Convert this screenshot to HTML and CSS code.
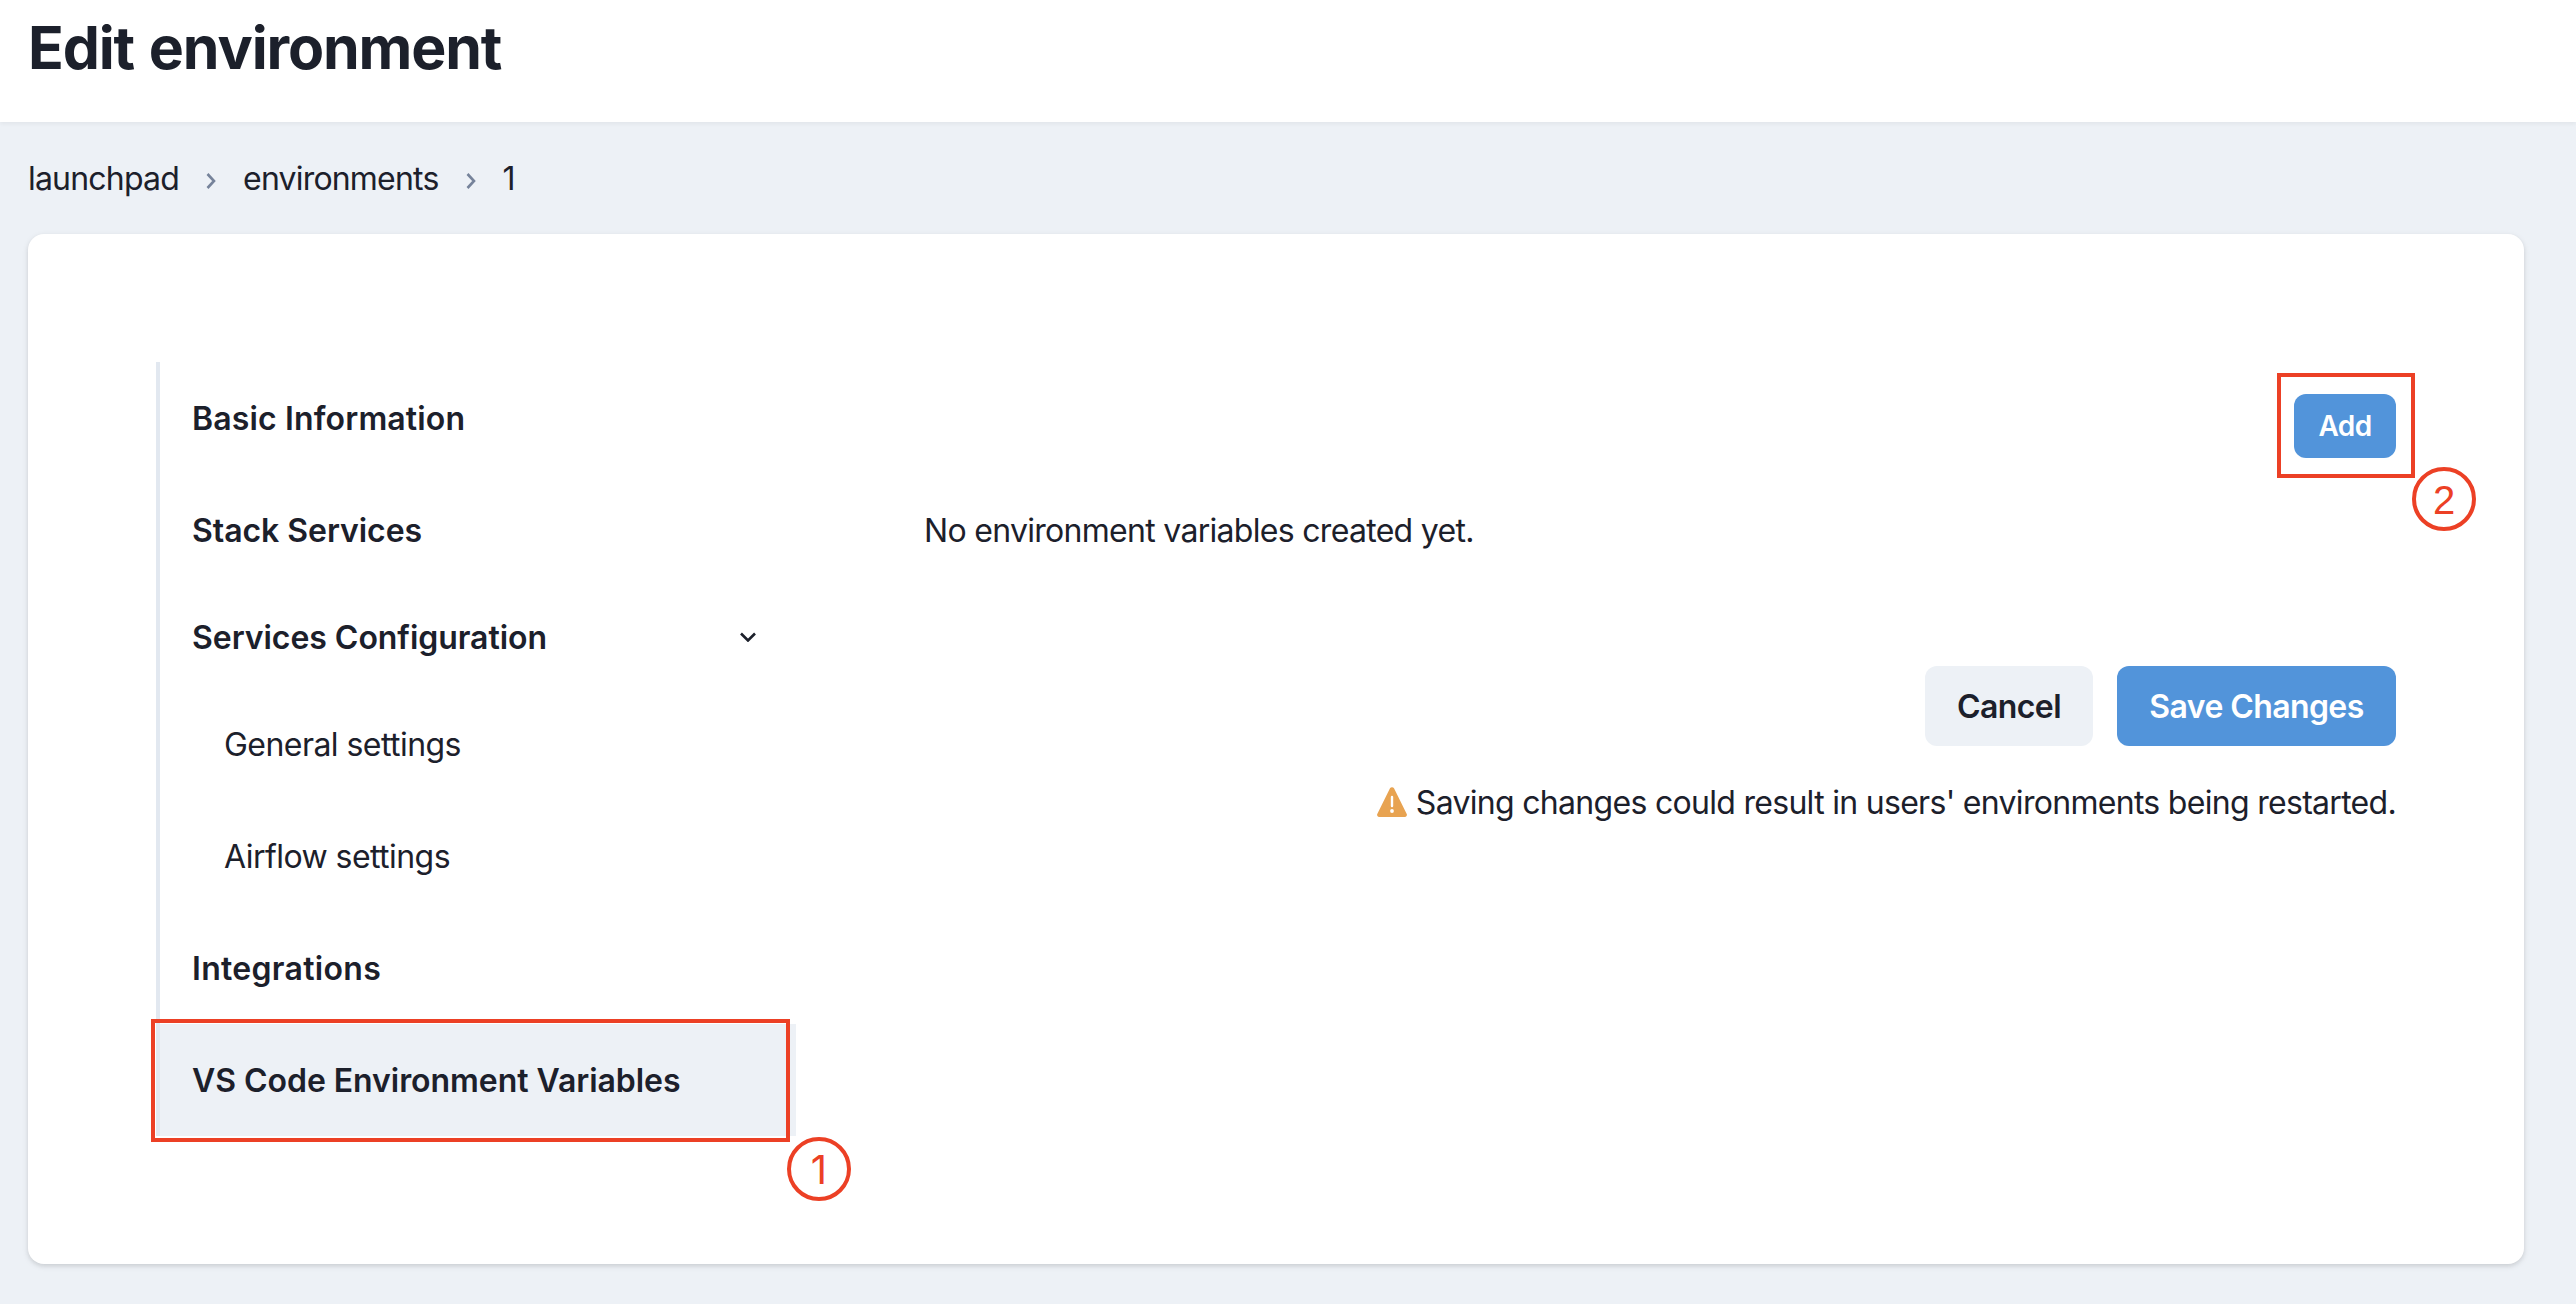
FILE: index.html
```html
<!DOCTYPE html>
<html lang="en">
<head>
<meta charset="utf-8">
<title>Edit environment</title>
<link rel="stylesheet" href="styles.css">
</head>
<body>
<header class="header"><h1 class="title">Edit environment</h1></header>
<main class="main">
  <nav class="crumbs">
    <a class="crumb">launchpad</a>
    <svg class="sep" viewBox="0 0 10 18"><path d="M1.500 2 8 9l-6.500 7"/></svg>
    <a class="crumb">environments</a>
    <svg class="sep" viewBox="0 0 10 18"><path d="M1.500 2 8 9l-6.500 7"/></svg>
    <span class="crumb">1</span>
  </nav>
  <section class="card">
    <ul class="tabs">
      <li class="tab"><span class="label wide">Basic Information</span></li>
      <li class="tab"><span class="label">Stack Services</span></li>
      <li class="tab group"><span class="label">Services Configuration</span>
        <svg class="chevron" viewBox="0 0 16 10"><path d="M1 1.500 8 8.500l7-7"/></svg></li>
      <li class="tab sub"><span class="label">General settings</span></li>
      <li class="tab sub"><span class="label">Airflow settings</span></li>
      <li class="tab"><span class="label wider">Integrations</span></li>
      <li class="tab active"><span class="label">VS Code Environment Variables</span>
        <span class="mark mark-tab"></span><span class="step step-one">1</span></li>
    </ul>
    <div class="panel">
      <div class="toolbar">
        <div class="anchor">
          <button class="btn primary small">Add</button>
          <span class="mark mark-add"></span><span class="step step-two">2</span>
        </div>
      </div>
      <p class="empty">No environment variables created yet.</p>
      <div class="actions">
        <button class="btn cancel">Cancel</button>
        <button class="btn primary save">Save Changes</button>
      </div>
      <p class="warning">
        <svg class="alert" viewBox="0 0 30 30"><path class="tri" d="M13 1.300a2.300 2.300 0 0 1 4 0L29.600 26.700A2.200 2.200 0 0 1 27.700 30H2.300A2.200 2.200 0 0 1 .4 26.700Z"/><path class="bang" d="M15 10v9"/><circle class="dot" cx="15" cy="24" r="1.900"/></svg>
        <span class="label">Saving changes could result in users' environments being restarted.</span>
      </p>
    </div>
  </section>
</main>
</body>
</html>
```
FILE: styles.css
```css
* { box-sizing: border-box; }
body {
  margin: 0;
  height: 1304px;
  overflow: hidden;
  background: #edf1f6;
  color: #1c202b;
  font: 400 32px/48px Inter, sans-serif;
  letter-spacing: -.7px;
}
.header {
  position: relative;
  height: 122px;
  padding: 3px 28px 0;
  background: #fff;
  box-shadow: 0 2px 4px rgba(0, 0, 0, .05);
}
.title {
  margin: 0;
  font-size: 59px;
  font-weight: 700;
  line-height: 90px;
  letter-spacing: -1.150px;
  word-spacing: 2px;
  white-space: nowrap;
}
.main { padding: 32px 52px 40px 28px; }
.crumbs { display: flex; align-items: center; height: 48px; margin-bottom: 32px; letter-spacing: -.8px; }
.crumb { padding-top: 2px; }
.sep { width: 10px; height: 18px; margin: 6px 27px 0; fill: none; stroke: #76839a; stroke-width: 2.600; }
.card {
  display: flex;
  height: 1030px;
  padding: 128px;
  border-radius: 16px;
  background: #fff;
  box-shadow: 0 2px 6px rgba(0, 0, 0, .1), 0 2px 4px rgba(0, 0, 0, .06);
}
.tabs { width: 640px; margin: 0; padding: 0; list-style: none; }
.tab {
  position: relative;
  display: flex;
  align-items: center;
  justify-content: space-between;
  height: 112px;
  padding: 0 40px 0 32px;
  border-left: 4px solid #e2e8f0;
  font-weight: 600;
  letter-spacing: -.05px;
}
.label { padding-top: 2px; white-space: nowrap; }
.wide { letter-spacing: .15px; }
.wider { letter-spacing: .3px; }
.group { height: 102px; }
.sub { padding-left: 64px; font-weight: 400; letter-spacing: -.55px; }
.active { background: #edf1f6; }
.chevron { width: 16px; height: 10px; fill: none; stroke: #1c202b; stroke-width: 2.600; }
.panel { flex: 1; padding: 32px 0 0 128px; }
.toolbar, .actions { display: flex; justify-content: flex-end; gap: 24px; }
.anchor { position: relative; }
.btn {
  height: 80px;
  padding: 2px 0 0;
  border: 0;
  border-radius: 12px;
  background: #edf1f6;
  color: inherit;
  font: 600 32px/48px Inter, sans-serif;
  letter-spacing: -.6px;
  white-space: nowrap;
}
.primary { background: #5294da; color: #fff; }
.small { display: block; width: 102px; height: 64px; padding: 0; font-size: 28px; }
.cancel { width: 168px; }
.save { width: 279px; }
.empty { margin: 49px 0 111px; }
.warning { display: flex; justify-content: flex-end; align-items: center; gap: 9px; margin: 31px 0 0; }
.alert { width: 30px; height: 30px; }
.tri { fill: #e8a351; }
.bang { stroke: #fff; stroke-width: 2.400; stroke-linecap: round; }
.dot { fill: #fff; }
.mark { position: absolute; border: 4px solid #ec4025; }
.mark-tab { left: -9px; top: -5px; width: 639px; height: 123px; }
.mark-add { left: -17px; top: -21px; width: 138px; height: 105px; }
.step {
  position: absolute;
  width: 64px;
  height: 64px;
  border: 4px solid #ec4025;
  border-radius: 50%;
  color: #ec4025;
  font: 400 40px/58px "Liberation Sans", sans-serif;
  letter-spacing: 0;
  text-align: center;
}
.step-one { left: 627px; top: 113px; font-family: Inter, sans-serif; }
.step-two { left: 118px; top: 73px; }
```
